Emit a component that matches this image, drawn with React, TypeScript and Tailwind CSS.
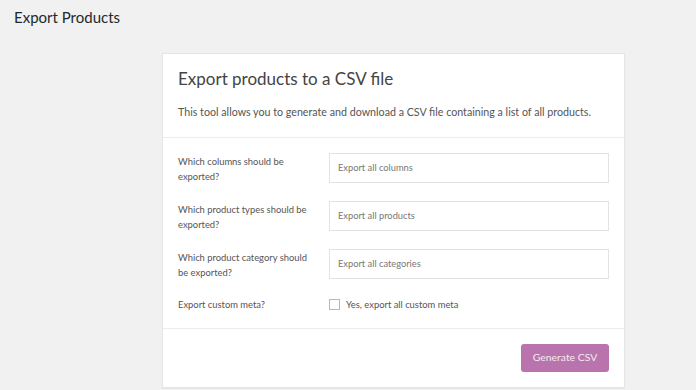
import React from "react";

// Export form rows
interface ExportRow {
  label: string[];
  placeholder: string;
}

const rows: ExportRow[] = [
  { label: ["Which columns should be", "exported?"], placeholder: "Export all columns" },
  { label: ["Which product types should be", "exported?"], placeholder: "Export all products" },
  { label: ["Which product category should", "be exported?"], placeholder: "Export all categories" },
];

const App = () => {
  return (
    <div
      className="h-[390px] w-full overflow-hidden bg-[#f1f1f1]"
      style={{ fontFamily: "Lato, 'Open Sans', sans-serif" }}
    >
      <h1 className="pl-[14px] pt-[6px] text-[15px] leading-[22px] text-[#23282d]">Export Products</h1>

      <div className="ml-[162px] mt-[25px] w-[463px] border border-[#e5e5e5] bg-white shadow-[0_1px_1px_rgba(0,0,0,0.04)]">
        {/* Header */}
        <div className="border-b border-[#ececec] px-[15px] pb-[16px] pt-[13px]">
          <h2 className="text-[17px] leading-[24px] text-[#444]">Export products to a CSV file</h2>
          <p className="mt-[12px] whitespace-nowrap text-[10.7px] leading-[18px] text-[#555]">
            This tool allows you to generate and download a CSV file containing a list of all products.
          </p>
        </div>

        {/* Form */}
        <div className="flex flex-col gap-[18px] px-[15px] pb-[15px] pt-[15px]">
          {rows.map((row, i) => (
            <div key={i} className="flex h-[30px] items-start">
              <div className="w-[151px] shrink-0 pt-[1px] text-[9.4px] leading-[15px] text-[#555]">
                {row.label.map((l, j) => (
                  <div key={j}>{l}</div>
                ))}
              </div>
              <div className="flex h-[30px] flex-1 items-center border border-[#e3e3e3] px-[8px] text-[9.3px] text-[#777]">
                {row.placeholder}
              </div>
            </div>
          ))}
          <div className="flex h-[16px] items-center">
            <div className="w-[151px] shrink-0 text-[9.4px] leading-[16px] text-[#555]">Export custom meta?</div>
            <label className="flex items-center gap-[6px] text-[9.4px] text-[#555]">
              <span className="h-[11px] w-[11px] border border-[#b4b9be] bg-white" />
              Yes, export all custom meta
            </label>
          </div>
        </div>

        {/* Footer */}
        <div className="flex justify-end border-t border-[#ececec] px-[15px] pb-[15px] pt-[15px]">
          <button className="h-[28px] w-[88px] rounded-[3px] bg-[#b974ad] text-[10.4px] text-[#f6e9f3]">
            Generate CSV
          </button>
        </div>
      </div>
    </div>
  );
};

export default App;
